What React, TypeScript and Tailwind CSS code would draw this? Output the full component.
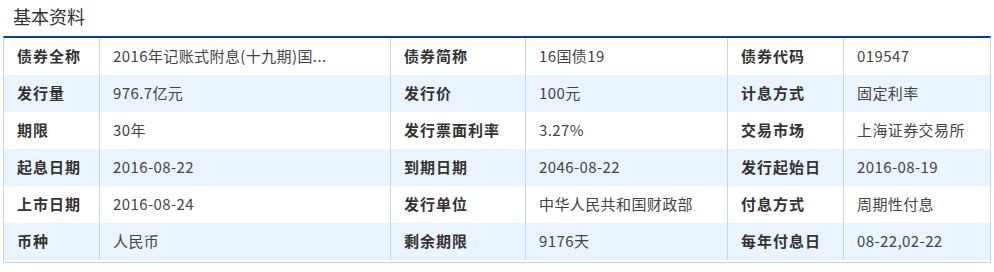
import React from 'react';

type Cell = { label: string; value: string };

const rows: Cell[][] = [
  [
    { label: '债券全称', value: '2016年记账式附息(十九期)国...' },
    { label: '债券简称', value: '16国债19' },
    { label: '债券代码', value: '019547' },
  ],
  [
    { label: '发行量', value: '976.7亿元' },
    { label: '发行价', value: '100元' },
    { label: '计息方式', value: '固定利率' },
  ],
  [
    { label: '期限', value: '30年' },
    { label: '发行票面利率', value: '3.27%' },
    { label: '交易市场', value: '上海证券交易所' },
  ],
  [
    { label: '起息日期', value: '2016-08-22' },
    { label: '到期日期', value: '2046-08-22' },
    { label: '发行起始日', value: '2016-08-19' },
  ],
  [
    { label: '上市日期', value: '2016-08-24' },
    { label: '发行单位', value: '中华人民共和国财政部' },
    { label: '付息方式', value: '周期性付息' },
  ],
  [
    { label: '币种', value: '人民币' },
    { label: '剩余期限', value: '9176天' },
    { label: '每年付息日', value: '08-22,02-22' },
  ],
];

const font = { fontFamily: '"Noto Sans CJK SC", "Noto Sans", sans-serif' };

export default function App() {
  return (
    <div className="w-[994px] h-[272px] bg-white" style={font}>
      <div className="h-[36px] pl-[13px] pt-[4px] text-[18px] leading-[24px] text-[#333]">基本资料</div>
      <div className="mx-[3px] border-t-2 border-t-[#0b3c9c] border-x border-b border-x-[#c3d6e8] border-b-[#c3d6e8] pb-[2px]">
        {rows.map((row, i) => (
          <div
            key={i}
            className={
              'grid grid-cols-[96px_291px_135px_202px_116px_146px] h-[37px] ' +
              (i % 2 === 1 ? 'bg-[#e9f4fe]' : 'bg-white')
            }
          >
            {row.map((c, j) => (
              <React.Fragment key={j}>
                <div className="flex items-center pl-[13px] border-r border-[#c3d6e8] text-[15px] font-bold tracking-[1px] text-[#333]">
                  {c.label}
                </div>
                <div
                  className={
                    'flex items-center pl-[13px] text-[15px] tracking-[0.4px] text-[#444] whitespace-nowrap overflow-hidden ' +
                    (j < 2 ? 'border-r border-[#c3d6e8]' : '')
                  }
                >
                  {c.value}
                </div>
              </React.Fragment>
            ))}
          </div>
        ))}
      </div>
    </div>
  );
}
